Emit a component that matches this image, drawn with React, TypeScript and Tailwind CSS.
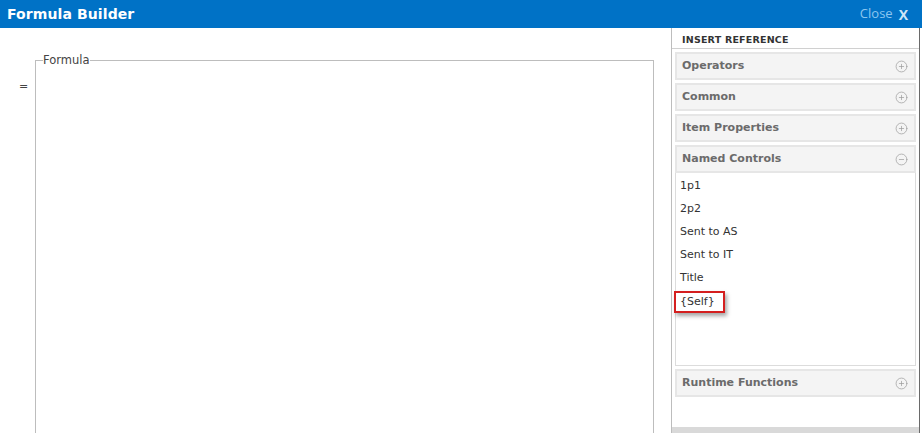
import { CirclePlus, CircleMinus } from "lucide-react";

const font = { fontFamily: '"DejaVu Sans", Verdana, sans-serif' };

function Section({ title, open }: { title: string; open?: boolean }) {
  return (
    <div className="h-[28px] border-2 border-[#e6e6e6] bg-[#f4f4f4] flex items-center justify-between pl-[5px] pr-[6px]">
      <span className="text-[11px] font-bold text-[#6b6b6b]">{title}</span>
      {open ? (
        <CircleMinus className="size-[13px] text-[#9a9a9a]" strokeWidth={1.3} />
      ) : (
        <CirclePlus className="size-[13px] text-[#9a9a9a]" strokeWidth={1.3} />
      )}
    </div>
  );
}

const controls = ["1p1", "2p2", "Sent to AS", "Sent to IT", "Title"];

export default function App() {
  return (
    <div className="w-[922px] h-[433px] overflow-hidden bg-white flex flex-col" style={font}>
      <header className="h-[28px] shrink-0 bg-[#0072c6] flex items-center justify-between pl-[7px] pr-[14px]">
        <h1 className="text-[14px] font-bold text-white tracking-[0.1px]">Formula Builder</h1>
        <div className="flex items-center gap-[6px]">
          <span className="text-[13px] text-[#8cc6f0]" style={{ fontFamily: '"Open Sans", sans-serif' }}>
            Close
          </span>
          <span className="text-[14px] font-bold text-[#cfe6f8]" style={{ fontFamily: '"Open Sans", sans-serif' }}>
            X
          </span>
        </div>
      </header>

      <div className="flex flex-1 min-h-0">
        <div className="w-[671px] shrink-0 flex pt-[25px]">
          <div className="w-[35px] shrink-0 pl-[19px] pt-[26px] text-[11px] text-[#444]">=</div>
          <fieldset className="w-[619px] h-[400px] border border-[#bdbdbd] px-[7px] pt-0">
            <legend className="px-0 text-[11.5px] text-[#444] leading-[14px]">Formula</legend>
          </fieldset>
        </div>

        <aside className="w-[249px] shrink-0 border-l border-[#bdbdbd] border-r border-r-[#6a6a6a] flex flex-col">
          <div className="h-[21px] border-b border-[#d0d0d0] pl-[10px] flex items-center pt-[5px]">
            <span className="text-[9.5px] font-bold text-[#333] tracking-[0.2px]">INSERT REFERENCE</span>
          </div>
          <div className="flex-1 px-[3px] pt-[3px] flex flex-col gap-[3px]">
            <Section title="Operators" />
            <Section title="Common" />
            <Section title="Item Properties" />
            <div>
              <Section title="Named Controls" open />
              <ul className="h-[193px] border border-t-0 border-[#dcdcdc] pl-[4px] pt-[1px] text-[11px] text-[#333]">
                {controls.map((c) => (
                  <li key={c} className="leading-[23px]">
                    {c}
                  </li>
                ))}
                <li className="leading-[23px] pt-[1px]">
                  <span className="inline-block -ml-[6px] pl-[4px] pr-[8px] border-2 border-[#d41f1f] leading-[18px] shadow-[2px_3px_4px_rgba(0,0,0,0.35)]">
                    {"{Self}"}
                  </span>
                </li>
              </ul>
            </div>
            <Section title="Runtime Functions" />
          </div>
          <div className="h-[6px] bg-[#d9d9d9]" />
        </aside>
      </div>
    </div>
  );
}
